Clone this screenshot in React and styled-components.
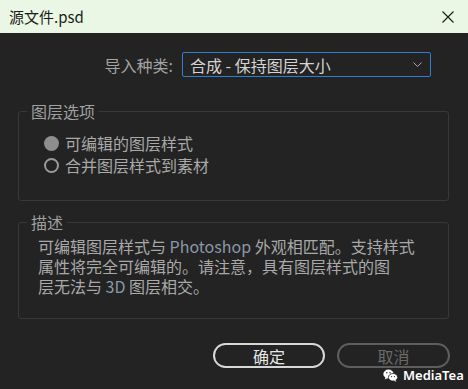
import React from 'react';
import styled, { createGlobalStyle } from 'styled-components';

const GlobalStyle = createGlobalStyle`
  html, body {
    margin: 0;
    padding: 0;
    background: #232323;
  }
  * {
    box-sizing: border-box;
  }
`;

const Window = styled.div`
  width: 468px;
  height: 389px;
  display: flex;
  flex-direction: column;
  background: #232323;
  font-family: "Noto Sans CJK SC", "Noto Sans", sans-serif;
  font-size: 16px;
  color: #a9a9a9;
  overflow: hidden;
  position: relative;
`;

const TitleBar = styled.div`
  height: 33px;
  flex: none;
  display: flex;
  align-items: center;
  justify-content: space-between;
  padding: 0 14px 0 9px;
  background: #eaf7e4;
  color: #1a1a1a;
  font-size: 15px;
`;

const CloseButton = styled.svg`
  width: 12px;
  height: 12px;
  display: block;
`;

const Body = styled.div`
  flex: 1;
  display: flex;
  flex-direction: column;
  padding: 19px 18px 0 18px;
`;

const ImportRow = styled.div`
  display: flex;
  justify-content: flex-end;
  align-items: center;
  gap: 9px;
  padding-right: 19px;
`;

const Label = styled.span`
  color: #a3a3a3;
  line-height: 20px;
`;

const Select = styled.div`
  width: 249px;
  height: 25px;
  display: flex;
  align-items: center;
  justify-content: space-between;
  padding: 0 8px 0 7px;
  border: 1.5px solid #2f7fd0;
  border-radius: 2px;
  color: #d4d4d4;
  line-height: 20px;
`;

const Chevron = styled.svg`
  width: 9px;
  height: 5px;
  display: block;
`;

const Group = styled.fieldset`
  margin: ${p => p.$top}px 0 0 0;
  padding: 0;
  width: 431px;
  height: ${p => p.$height}px;
  border: 1px solid #383838;
  border-radius: 3px;
  min-width: 0;
`;

const Legend = styled.legend`
  margin-left: 8px;
  padding: 0 4px;
  color: #a0a0a0;
  line-height: 20px;
`;

const RadioList = styled.div`
  display: flex;
  flex-direction: column;
  gap: 2px;
  padding: 12px 0 0 25px;
`;

const RadioItem = styled.div`
  display: flex;
  align-items: center;
  gap: 6px;
  line-height: 20px;
  color: #a9a9a9;
`;

const RadioDot = styled.span`
  width: 15px;
  height: 15px;
  border-radius: 50%;
  flex: none;
  background: ${p => (p.$checked ? '#8e8e8e' : 'transparent')};
  border: ${p => (p.$checked ? 'none' : '2.5px solid #9a9a9a')};
`;

const Description = styled.div`
  padding: 4px 0 0 19px;
  display: flex;
  flex-direction: column;
  color: #a9a9a9;
`;

const DescLine = styled.div`
  height: 20px;
  line-height: 20px;
  white-space: nowrap;
`;

const Term = styled.span`
  display: inline-block;
  height: 20px;
  line-height: 20px;
  color: #8a98a8;
`;

const ButtonRow = styled.div`
  display: flex;
  justify-content: flex-end;
  gap: 12px;
  margin-top: 24px;
`;

const Button = styled.div`
  width: ${p => p.$width}px;
  height: 25px;
  display: flex;
  align-items: center;
  justify-content: center;
  border-radius: 13px;
  border: 2px solid ${p => (p.$disabled ? '#5e5e5e' : '#d8d8d8')};
  color: ${p => (p.$disabled ? '#6a6a6a' : '#e6e6e6')};
  line-height: 20px;
`;

const Watermark = styled.div`
  position: absolute;
  left: 383px;
  top: 366px;
  display: flex;
  align-items: center;
  gap: 5px;
  color: #ffffff;
  font-family: "Noto Sans", "Liberation Sans", sans-serif;
  font-weight: 600;
  font-size: 13px;
  line-height: 18px;
`;

const WeChat = styled.svg`
  width: 15px;
  height: 13px;
  display: block;
`;

export default function App() {
  return (
    <>
      <GlobalStyle />
      <Window>
        <TitleBar>
          <span>源文件.psd</span>
          <CloseButton viewBox="0 0 12 12">
            <path d="M0.5 0.5 L11.5 11.5 M11.5 0.5 L0.5 11.5" stroke="#1a1a1a" strokeWidth="1.1" fill="none" />
          </CloseButton>
        </TitleBar>
        <Body>
          <ImportRow>
            <Label>导入种类:</Label>
            <Select>
              <span>合成 - 保持图层大小</span>
              <Chevron viewBox="0 0 9 5">
                <path d="M0.5 0.5 L4.5 4.5 L8.5 0.5" stroke="#a8a8a8" strokeWidth="1" fill="none" />
              </Chevron>
            </Select>
          </ImportRow>

          <Group $top={24} $height={100}>
            <Legend>图层选项</Legend>
            <RadioList>
              <RadioItem>
                <RadioDot $checked />
                可编辑的图层样式
              </RadioItem>
              <RadioItem>
                <RadioDot />
                合并图层样式到素材
              </RadioItem>
            </RadioList>
          </Group>

          <Group $top={11} $height={107}>
            <Legend>描述</Legend>
            <Description>
              <DescLine>可编辑图层样式与 <Term>Photoshop</Term> 外观相匹配。支持样式</DescLine>
              <DescLine>属性将完全可编辑的。请注意，具有图层样式的图</DescLine>
              <DescLine>层无法与 <Term>3D</Term> 图层相交。</DescLine>
            </Description>
          </Group>

          <ButtonRow>
            <Button $width={112}>确定</Button>
            <Button $width={113} $disabled>取消</Button>
          </ButtonRow>
        </Body>
        <Watermark>
          <WeChat viewBox="0 0 15 13">
            <ellipse cx="5.5" cy="5" rx="5.2" ry="4.4" fill="#ffffff" />
            <path d="M2.5 8 L1.8 10.5 L4.8 9" fill="#ffffff" />
            <ellipse cx="10" cy="8.3" rx="4.6" ry="3.8" fill="#ffffff" stroke="#232323" strokeWidth="0.8" />
            <path d="M12.4 11 L13.4 12.8 L10.8 11.8" fill="#ffffff" />
            <circle cx="3.8" cy="3.8" r="0.7" fill="#232323" />
            <circle cx="7" cy="3.8" r="0.7" fill="#232323" />
            <circle cx="8.6" cy="7.6" r="0.6" fill="#232323" />
            <circle cx="11.4" cy="7.6" r="0.6" fill="#232323" />
          </WeChat>
          MediaTea
        </Watermark>
      </Window>
    </>
  );
}
